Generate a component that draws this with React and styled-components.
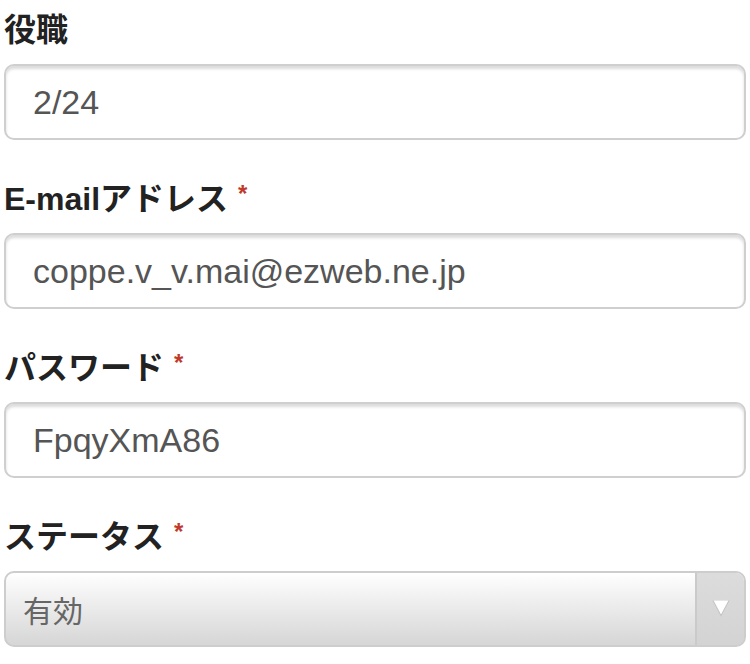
import React from "react";
import styled, { createGlobalStyle } from "styled-components";

const Global = createGlobalStyle`
  body {
    margin: 0;
    background: #fff;
    font-family: "Liberation Sans", "Noto Sans CJK JP", sans-serif;
  }
`;

const fields = [
  { label: "役職", value: "2/24" },
  { label: "E-mailアドレス", value: "coppe.v_v.mai@ezweb.ne.jp", required: true },
  { label: "パスワード", value: "FpqyXmA86", required: true },
];

const ArrowDown = () => (
  <svg width="20" height="19" viewBox="0 0 20 19">
    <path d="M1.5 1.5 H18.5 L10 17.5 Z" fill="#c2c2c2" />
    <path d="M2.6 1.5 H17.4 L10 15.6 Z" fill="#fff" />
  </svg>
);

const App = () => {
  return (
    <S.Form>
      <Global />
      {fields.map((f) => (
        <S.Field key={f.label}>
          <S.Label>
            {f.label}
            {f.required && <S.Req>*</S.Req>}
          </S.Label>
          <S.Input type="text" defaultValue={f.value} readOnly />
        </S.Field>
      ))}
      <S.Field>
        <S.Label>
          ステータス
          <S.Req>*</S.Req>
        </S.Label>
        <S.Select>
          <S.SelectText>有効</S.SelectText>
          <S.SelectArrow>
            <ArrowDown />
          </S.SelectArrow>
        </S.Select>
      </S.Field>
    </S.Form>
  );
};

const S = {
  Form: styled.div`
    display: flex;
    flex-direction: column;
    gap: 39px;
    padding: 10px 4px 0;
  `,
  Field: styled.div`
    display: flex;
    flex-direction: column;
    gap: 14px;
  `,
  Label: styled.div`
    display: flex;
    align-items: flex-start;
    height: 40px;
    line-height: 40px;
    font-size: 32px;
    font-weight: bold;
    color: #222;
    font-family: "Liberation Sans", "Noto Sans CJK JP", sans-serif;
  `,
  Req: styled.span`
    margin-left: 10px;
    font-size: 24px;
    line-height: 30px;
    color: #c0392b;
  `,
  Input: styled.input`
    box-sizing: border-box;
    width: 100%;
    height: 76px;
    margin: 0;
    padding: 0 20px 0 27px;
    border: 2px solid #cfcfcf;
    border-radius: 10px;
    box-shadow: inset 0 3px 3px rgba(0, 0, 0, 0.14);
    background: #fff;
    font-family: "Liberation Sans", "Noto Sans CJK JP", sans-serif;
    font-size: 34px;
    color: #555;
    outline: none;
  `,
  Select: styled.div`
    box-sizing: border-box;
    display: flex;
    height: 76px;
    border: 2px solid #cdcdcd;
    border-radius: 10px;
    overflow: hidden;
    background: linear-gradient(#ffffff, #ececec 45%, #d6d6d6);
  `,
  SelectText: styled.div`
    flex: 1;
    display: flex;
    align-items: center;
    padding-left: 17px;
    font-family: "Noto Sans CJK JP", sans-serif;
    font-size: 30px;
    color: #666;
  `,
  SelectArrow: styled.div`
    width: 47px;
    display: flex;
    align-items: center;
    justify-content: center;
    border-left: 2px solid #cacaca;
    background: linear-gradient(#dcdcdc, #d3d3d3);
    padding-bottom: 2px;
  `,
};

export default App;
